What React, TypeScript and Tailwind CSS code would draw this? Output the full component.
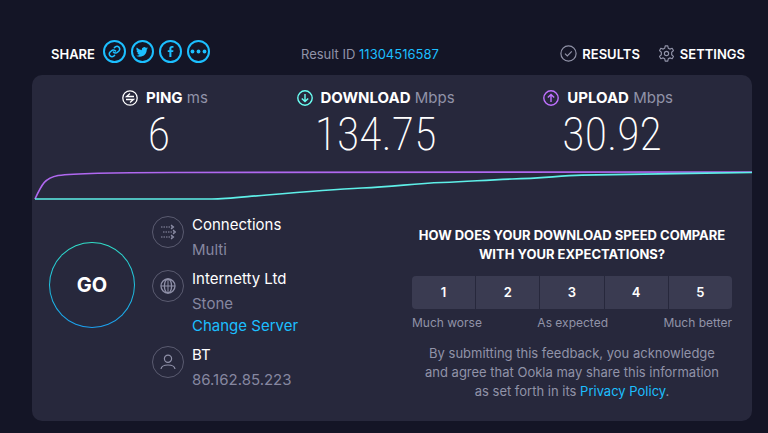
import type { ReactNode } from "react";

const ratings = [1, 2, 3, 4, 5];

function CircleIcon({ children }: { children: ReactNode }) {
  return (
    <span className="flex size-8 shrink-0 items-center justify-center rounded-full border border-[#5a5b70] text-[#8f90a8]">
      {children}
    </span>
  );
}

function ShareButton({ label, children }: { label: string; children: ReactNode }) {
  return (
    <button aria-label={label} className="flex size-[23px] items-center justify-center rounded-full border-2 border-[#1cbfff] text-[#1cbfff]">
      {children}
    </button>
  );
}

function Header() {
  return (
    <header className="flex h-[75px] items-center pt-8 pr-[7px] pl-[19px] text-[13px] leading-5">
      <span className="font-semibold text-white">SHARE</span>
      <div className="ml-2 flex gap-[5px] pb-1">
        <ShareButton label="Copy link">
          <svg width="13" height="13" viewBox="0 0 24 24" fill="none" stroke="currentColor" strokeWidth="2.8" strokeLinecap="round">
            <path d="M10 13a5 5 0 0 0 7.5.5l3-3a5 5 0 0 0-7-7l-1.8 1.7" />
            <path d="M14 11a5 5 0 0 0-7.5-.5l-3 3a5 5 0 0 0 7 7l1.7-1.7" />
          </svg>
        </ShareButton>
        <ShareButton label="Twitter">
          <svg width="12" height="12" viewBox="0 0 24 24" fill="currentColor">
            <path d="M23.95 4.600a10 10 0 0 1-2.800.8 4.900 4.900 0 0 0 2.100-2.700 9.900 9.900 0 0 1-3.100 1.200 4.900 4.900 0 0 0-8.400 4.500A14 14 0 0 1 1.600 3.200a4.900 4.900 0 0 0 1.500 6.500 4.900 4.900 0 0 1-2.200-.6 4.900 4.900 0 0 0 4 4.900 5 5 0 0 1-2.200.1 4.900 4.900 0 0 0 4.600 3.400A9.900 9.900 0 0 1 0 19.500a14 14 0 0 0 7.500 2.200c9.100 0 14-7.500 14-14v-.6a10 10 0 0 0 2.450-2.500z" />
          </svg>
        </ShareButton>
        <ShareButton label="Facebook">
          <svg width="11" height="11" viewBox="0 0 24 24" fill="currentColor">
            <path d="M9.500 24V13.200H6V9h3.500V5.800C9.500 2.200 11.700 0 15 0h3.500v4h-2.300c-1.700 0-2.200.8-2.200 2.200V9h4.400l-.6 4.200H14V24z" />
          </svg>
        </ShareButton>
        <ShareButton label="More">
          <svg width="17" height="5" viewBox="0 0 17 5" fill="currentColor">
            <circle cx="2.500" cy="2.500" r="1.900" />
            <circle cx="8.500" cy="2.500" r="1.900" />
            <circle cx="14.500" cy="2.500" r="1.900" />
          </svg>
        </ShareButton>
      </div>
      <p className="ml-[91px] text-[#9193a8]">
        Result ID <a href="#result" className="text-[#1cbfff]">11304516587</a>
      </p>
      <nav className="ml-auto flex gap-[18px] font-semibold text-white">
        <a href="#results" className="flex items-center gap-[5px]">
          <svg width="17" height="17" viewBox="0 0 17 17" fill="none" stroke="#9193a8" strokeWidth="1.200">
            <circle cx="8.500" cy="8.500" r="7.600" />
            <path d="M5 8.700l2.300 2.300 4.500-4.600" />
          </svg>
          RESULTS
        </a>
        <a href="#settings" className="flex items-center gap-[5px]">
          <svg width="17" height="17" viewBox="0 0 24 24" fill="none" stroke="#9193a8" strokeWidth="1.600" strokeLinejoin="round">
            <path d="M9.500 4.500L10.200 1.200h3.600l.7 3.300 2.200 1.300 3.300-1.100 1.800 3.200-2.500 2.300v3.600l2.500 2.300-1.800 3.200-3.300-1.100-2.200 1.300-.7 3.300h-3.600l-.7-3.300-2.200-1.300-3.300 1.100-1.800-3.200 2.500-2.300v-3.600L2.200 7.900 4 4.700l3.300 1.100z" />
            <circle cx="12" cy="12" r="3" />
          </svg>
          SETTINGS
        </a>
      </nav>
    </header>
  );
}

function Stat({ name, unit, value, icon, valueClass = "" }: {
  name: string;
  unit: string;
  value: string;
  icon: ReactNode;
  valueClass?: string;
}) {
  return (
    <div className="flex flex-col items-center">
      <h2 className="flex items-center gap-2 text-[15px] leading-5 whitespace-nowrap">
        {icon}
        <span>
          <span className="font-bold text-white">{name}</span>{" "}
          <span className="text-[#9193a8]">{unit}</span>
        </span>
      </h2>
      <p className={`font-['Roboto_Condensed','Liberation_Sans_Narrow','Roboto',sans-serif] text-[46px] leading-[52px] font-extralight text-white ${valueClass}`}>
        {value}
      </p>
    </div>
  );
}

function Stats() {
  return (
    <section className="flex justify-between pt-[13px] pr-[79px] pl-[90px]">
      <Stat
        name="PING"
        unit="ms"
        value="6"
        valueClass="pr-3"
        icon={
          <svg width="16" height="16" viewBox="0 0 16 16" fill="none" stroke="#fff" strokeWidth="1.300">
            <circle cx="8" cy="8" r="7.200" />
            <path d="M12 6.500H4.500L8 3.500M4 9.500h7.500L8 12.500" />
          </svg>
        }
      />
      <Stat
        name="DOWNLOAD"
        unit="Mbps"
        value="134.75"
        icon={
          <svg width="16" height="16" viewBox="0 0 16 16" fill="none" stroke="#6afff3" strokeWidth="1.400">
            <circle cx="8" cy="8" r="7.200" />
            <path d="M8 4v7.500M4.800 8.500L8 11.600l3.200-3.100" />
          </svg>
        }
      />
      <Stat
        name="UPLOAD"
        unit="Mbps"
        value="30.92"
        valueClass="pl-2"
        icon={
          <svg width="16" height="16" viewBox="0 0 16 16" fill="none" stroke="#bf71ff" strokeWidth="1.400">
            <circle cx="8" cy="8" r="7.200" />
            <path d="M8 12V4.500M4.800 7.500L8 4.400l3.200 3.100" />
          </svg>
        }
      />
    </section>
  );
}

function SpeedChart() {
  return (
    <svg className="mt-2 block h-10 w-full" viewBox="0 0 720 40" preserveAspectRatio="none" fill="none" strokeWidth="1.700">
      <path stroke="#b068f0" d="M3 31C10 16 13 10 26 7.500C45 5 90 4.500 140 4.500L720 4" />
      <path stroke="#5eefe8" d="M3 31H180C195 31 215 28.500 235 27C270 24 300 21.500 330 20C365 18.500 380 15.500 410 14.500C440 13.500 450 12 480 11C510 10.500 525 8 550 7.200C590 6.500 660 5 720 4.500" />
    </svg>
  );
}

function ServerInfo() {
  return (
    <div className="flex flex-col text-[15px]">
      <div className="flex h-[54px] gap-2">
        <CircleIcon>
          <svg width="16" height="16" viewBox="0 0 16 16" fill="none" stroke="currentColor" strokeWidth="1.200">
            <path strokeDasharray="1.500 1" d="M1 3h11M3 8h11M1 13h11" />
            <path d="M11 1l2.500 2L11 5M13 6l2.500 2L13 10M11 11l2.500 2-2.500 2" />
          </svg>
        </CircleIcon>
        <div>
          <h3 className="leading-[18px] text-white">Connections</h3>
          <p className="mt-[7px] leading-[18px] text-[#8687a0]">Multi</p>
        </div>
      </div>
      <div className="flex h-[76px] gap-2">
        <CircleIcon>
          <svg width="16" height="16" viewBox="0 0 16 16" fill="none" stroke="currentColor" strokeWidth="1.300">
            <circle cx="8" cy="8" r="7" />
            <ellipse cx="8" cy="8" rx="3.600" ry="7" />
            <path d="M1 8h14M8 1v14" strokeWidth="1" />
          </svg>
        </CircleIcon>
        <div>
          <h3 className="leading-[18px] text-white">Internetty Ltd</h3>
          <p className="mt-[7px] leading-[18px] text-[#8687a0]">Stone</p>
          <a href="#servers" className="mt-1 block leading-[18px] text-[#1cbfff]">Change Server</a>
        </div>
      </div>
      <div className="flex gap-2">
        <CircleIcon>
          <svg width="16" height="16" viewBox="0 0 16 16" fill="none" stroke="currentColor" strokeWidth="1.200">
            <circle cx="8" cy="4.700" r="3.600" />
            <path d="M1 15c.4-2.800 3-4 7-4s6.600 1.200 7 4" />
          </svg>
        </CircleIcon>
        <div>
          <h3 className="leading-[18px] text-white">BT</h3>
          <p className="mt-[7px] leading-[18px] text-[#8687a0]">86.162.85.223</p>
        </div>
      </div>
    </div>
  );
}

function Survey() {
  return (
    <section className="mt-[10px] mr-5 ml-auto w-[320px] text-center text-[13px] leading-[19px] text-[#9193a8]">
      <h2 className="font-bold whitespace-nowrap text-white">
        HOW DOES YOUR DOWNLOAD SPEED COMPARE
        <br />
        WITH YOUR EXPECTATIONS?
      </h2>
      <div className="mt-3 grid grid-cols-5 gap-px overflow-hidden rounded">
        {ratings.map((n) => (
          <button key={n} className="h-[33px] bg-[#3a3b51] font-semibold text-white">
            {n}
          </button>
        ))}
      </div>
      <div className="mt-[7px] flex justify-between text-xs leading-[14px]">
        <span>Much worse</span>
        <span>As expected</span>
        <span>Much better</span>
      </div>
      <p className="mt-[14px]">
        By submitting this feedback, you acknowledge
        <br />
        and agree that Ookla may share this information
        <br />
        as set forth in its <a href="#privacy" className="text-[#1cbfff]">Privacy Policy</a>.
      </p>
    </section>
  );
}

export default function App() {
  return (
    <div className="min-h-screen bg-[#141526] pr-4 pb-3 pl-8 font-['Inter',sans-serif]">
      <Header />
      <main className="rounded-[10px] bg-[#27283c] pb-5">
        <Stats />
        <SpeedChart />
        <div className="flex pt-2 pl-[17px]">
          <button className="mt-[26px] size-[86px] shrink-0 rounded-full bg-linear-to-b from-[#32e0c8] to-[#1c9ff0] p-px">
            <span className="flex size-full items-center justify-center rounded-full bg-[#27283c] text-xl font-bold text-white">
              GO
            </span>
          </button>
          <div className="ml-[17px]">
            <ServerInfo />
          </div>
          <Survey />
        </div>
      </main>
    </div>
  );
}
